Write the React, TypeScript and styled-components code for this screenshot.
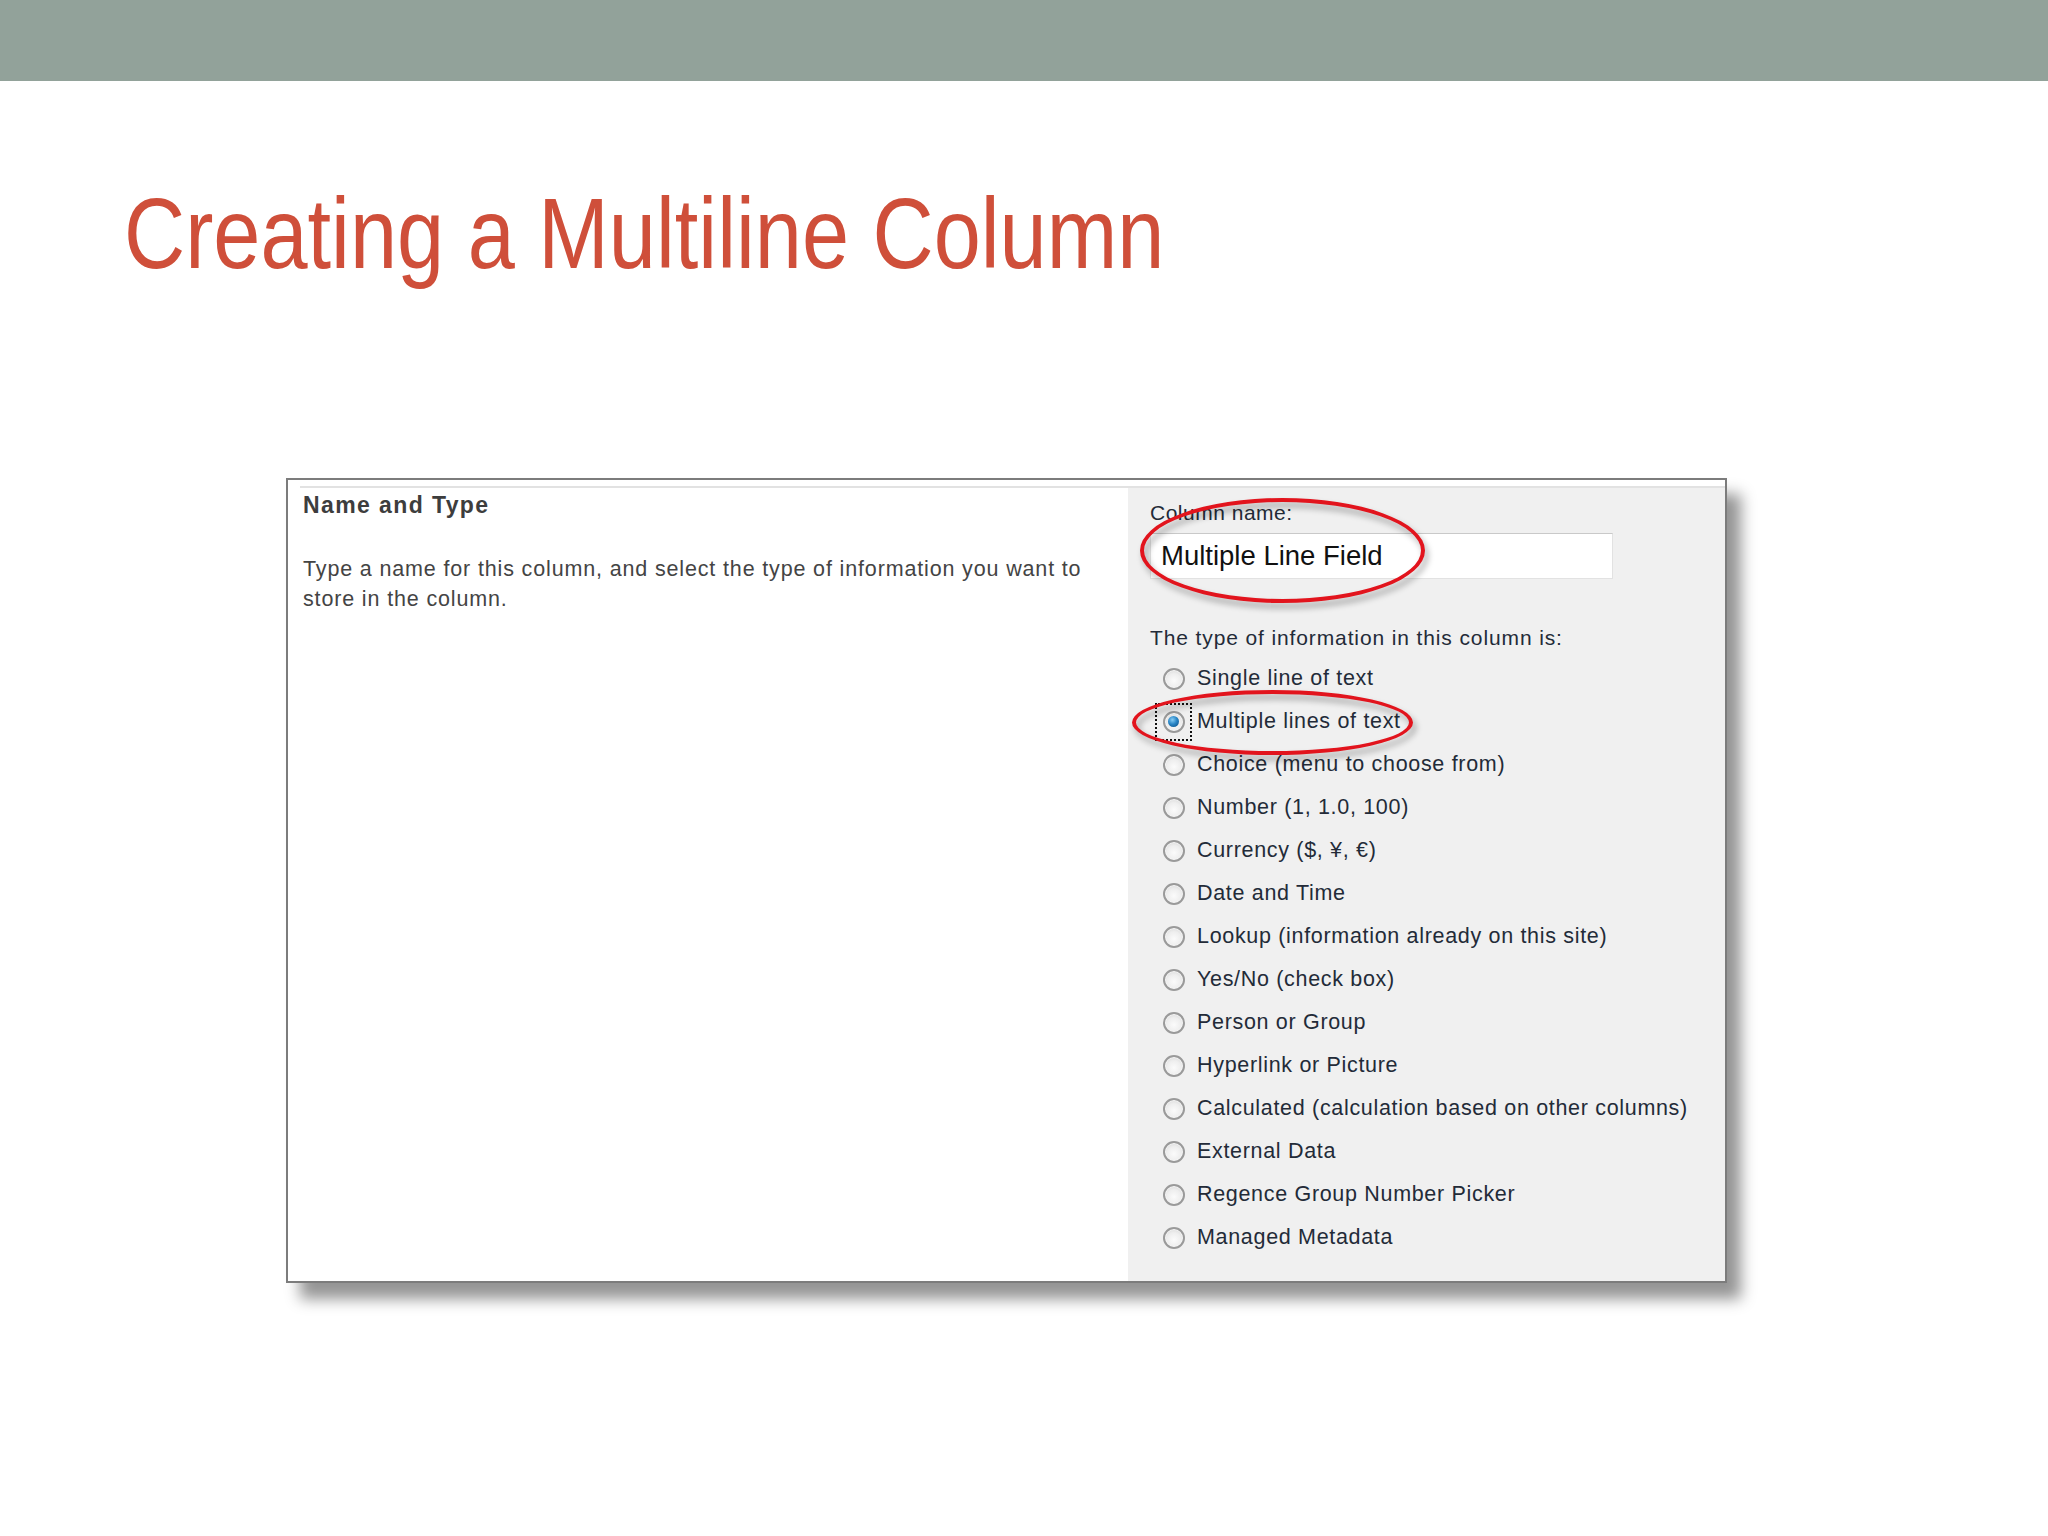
import React from 'react';
import styled, { createGlobalStyle } from 'styled-components';

const GlobalStyle = createGlobalStyle`
  html, body {
    margin: 0;
    padding: 0;
    background: #fff;
  }
  body {
    width: 2048px;
    height: 1536px;
    overflow: hidden;
    font-family: 'Liberation Sans', Arial, sans-serif;
  }
`;

const TopBar = styled.div`
  height: 81px;
  background: #92a29a;
`;

const Title = styled.h1`
  margin: 102px 0 0 124px;
  font-family: 'Liberation Sans', Arial, sans-serif;
  font-weight: normal;
  font-size: 100px;
  line-height: 100px;
  color: #cf4f3a;
  white-space: nowrap;
  transform: scaleX(0.847);
  transform-origin: left center;
`;

const Panel = styled.div`
  margin: 195px 0 0 286px;
  width: 1425px;
  height: 795px;
  border: 2px solid #7c7c7c;
  background: #fff;
  padding: 6px 0 0 12px;
  box-sizing: content-box;
  box-shadow: 14px 16px 14px rgba(0, 0, 0, 0.42);
  display: flex;
  flex-direction: column;
`;

const Section = styled.div`
  flex: 1;
  border-top: 2px solid #e2e2e2;
  display: grid;
  grid-template-columns: 828px 1fr;
`;

const InfoColumn = styled.div`
  padding: 2px 0 0 3px;
  background: #fff;
`;

const Heading = styled.div`
  font-weight: bold;
  font-size: 23px;
  line-height: 30px;
  letter-spacing: 1.4px;
  color: #3d3d3d;
`;

const Description = styled.p`
  margin: 34px 0 0;
  font-size: 21.5px;
  line-height: 30px;
  letter-spacing: 0.85px;
  color: #444;
  max-width: 800px;
`;

const FormColumn = styled.div`
  position: relative;
  background: #f0f0f0;
  padding: 11px 0 0 22px;
`;

const Label = styled.div<{ $gap?: number; $spacing?: number }>`
  margin-top: ${(p) => p.$gap ?? 0}px;
  font-size: 21px;
  line-height: 28px;
  letter-spacing: ${(p) => p.$spacing ?? 0.5}px;
  color: #232b38;
`;

const NameInput = styled.div`
  margin-top: 6px;
  width: 463px;
  height: 46px;
  box-sizing: border-box;
  background: #fff;
  border: 1px solid #e2e2e2;
  border-top-color: #c9c9c9;
  padding-left: 10px;
  font-size: 27.5px;
  line-height: 44px;
  color: #111;
`;

const OptionList = styled.ul`
  list-style: none;
  margin: 5px 0 0;
  padding: 0;
`;

const Option = styled.li`
  height: 43px;
  display: flex;
  align-items: center;
  padding-left: 5px;
  font-size: 21.5px;
  letter-spacing: 0.68px;
  color: #232b38;
`;

const FocusBox = styled.span<{ $focused?: boolean }>`
  width: 37px;
  height: 38px;
  box-sizing: border-box;
  border: 2px dotted ${(p) => (p.$focused ? '#111' : 'transparent')};
  display: flex;
  align-items: center;
  justify-content: center;
  margin-right: 5px;
  flex-shrink: 0;
`;

const RadioCircle = styled.span<{ $checked?: boolean }>`
  width: 22px;
  height: 22px;
  box-sizing: border-box;
  border-radius: 50%;
  border: 2px solid #9a9a9a;
  background: radial-gradient(circle at 50% 60%, #fbfbfb 0%, #eeeeee 50%, #cfcfcf 100%);
  box-shadow: inset 0 0 0 1px #f6f6f6;
  display: flex;
  align-items: center;
  justify-content: center;

  &::after {
    content: '';
    display: ${(p) => (p.$checked ? 'block' : 'none')};
    width: 11px;
    height: 11px;
    border-radius: 50%;
    background: radial-gradient(circle at 40% 35%, #86cdf5 0%, #2a86c6 45%, #0b4b80 100%);
  }
`;

const Callout = styled.div<{ $left: number; $top: number; $w: number; $h: number }>`
  position: absolute;
  left: ${(p) => p.$left}px;
  top: ${(p) => p.$top}px;
  width: ${(p) => p.$w}px;
  height: ${(p) => p.$h}px;
  box-sizing: border-box;
  border: 4px solid #e2141d;
  border-radius: 50%;
  filter: drop-shadow(3px 5px 3px rgba(0, 0, 0, 0.35));
  pointer-events: none;
`;

const options = [
  'Single line of text',
  'Multiple lines of text',
  'Choice (menu to choose from)',
  'Number (1, 1.0, 100)',
  'Currency ($, ¥, €)',
  'Date and Time',
  'Lookup (information already on this site)',
  'Yes/No (check box)',
  'Person or Group',
  'Hyperlink or Picture',
  'Calculated (calculation based on other columns)',
  'External Data',
  'Regence Group Number Picker',
  'Managed Metadata',
];

const App: React.FC = () => {
  const selected = 'Multiple lines of text';

  return (
    <>
      <GlobalStyle />
      <TopBar />
      <Title>Creating a Multiline Column</Title>
      <Panel>
        <Section>
          <InfoColumn>
            <Heading>Name and Type</Heading>
            <Description>
              Type a name for this column, and select the type of information you want to store in the column.
            </Description>
          </InfoColumn>
          <FormColumn>
            <Label>Column name:</Label>
            <NameInput>Multiple Line Field</NameInput>
            <Label $gap={45} $spacing={0.88}>
              The type of information in this column is:
            </Label>
            <OptionList>
              {options.map((o) => (
                <Option key={o}>
                  <FocusBox $focused={o === selected}>
                    <RadioCircle $checked={o === selected} />
                  </FocusBox>
                  {o}
                </Option>
              ))}
            </OptionList>
            <Callout $left={12} $top={10} $w={285} $h={105} />
            <Callout $left={4} $top={202} $w={281} $h={65} />
          </FormColumn>
        </Section>
      </Panel>
    </>
  );
};

export default App;
